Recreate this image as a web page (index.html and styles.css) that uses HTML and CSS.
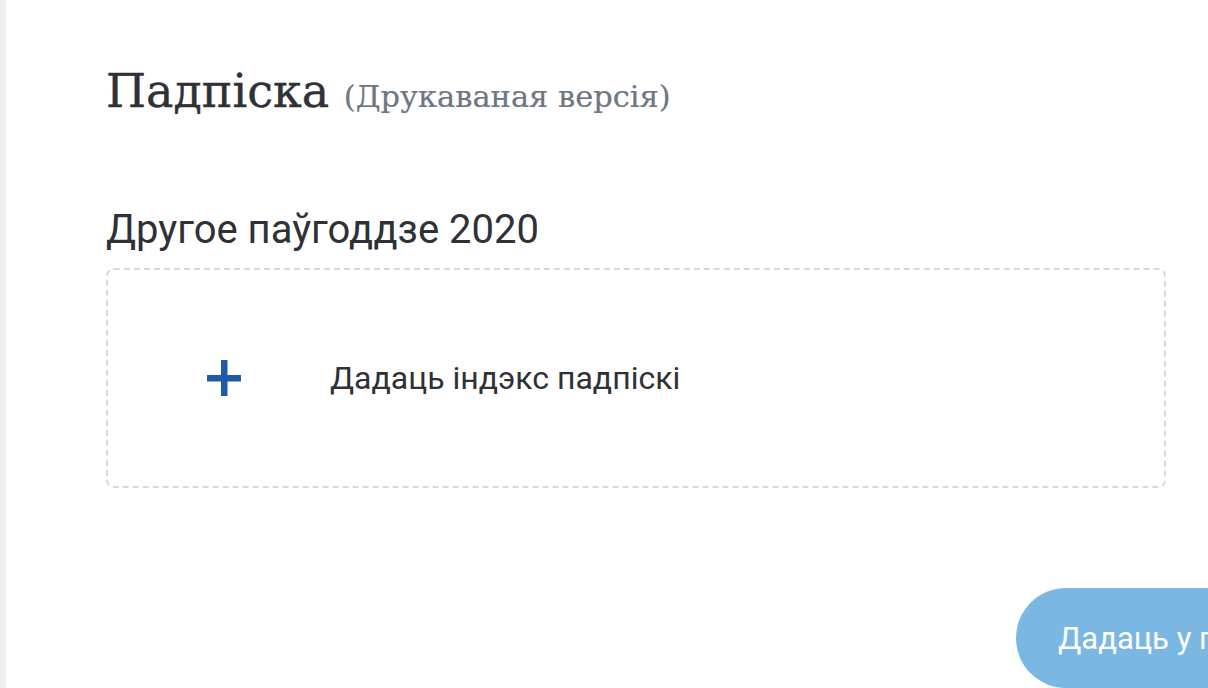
FILE: index.html
```html
<!DOCTYPE html>
<html lang="be">
<head>
<meta charset="utf-8">
<link rel="stylesheet" href="styles.css">
</head>
<body>
<div class="page">
  <div class="strip"></div>
  <main class="main">
    <h1 class="title">Падпіска <span class="subtitle">(Друкаваная версія)</span></h1>
    <h2 class="period">Другое паўгоддзе 2020</h2>
    <div class="addbox">
      <span class="plus">
        <svg width="34" height="36" viewBox="0 0 34 36"><rect x="14" y="0" width="6.5" height="36" fill="#1f5aa6"/><rect x="0" y="15" width="34" height="6.5" fill="#1f5aa6"/></svg>
      </span>
      <span class="addtext">Дадаць індэкс падпіскі</span>
    </div>
    <div class="actions">
      <button class="btn">Дадаць у падпіску</button>
    </div>
  </main>
</div>
</body>
</html>
```
FILE: styles.css
```css
html, body {
  margin: 0;
  padding: 0;
  background: #ffffff;
  overflow: hidden;
}
.page {
  display: flex;
  width: 1208px;
  height: 688px;
  overflow: hidden;
}
.strip {
  width: 6px;
  flex: none;
  background: #efefef;
}
.main {
  flex: none;
  width: 1400px;
  padding-left: 100px;
  box-sizing: border-box;
}
.title {
  margin: 0;
  padding-top: 61px;
  font-family: "DejaVu Serif", serif;
  font-weight: normal;
  font-size: 46px;
  line-height: 60px;
  color: #2e3136;
  -webkit-text-stroke: 0.4px #2e3136;
}
.subtitle {
  font-size: 30.5px;
  color: #6d7782;
  -webkit-text-stroke: 0.2px #6d7782;
}
.period {
  margin: 0;
  padding-top: 81px;
  font-family: Roboto, "Noto Sans", sans-serif;
  font-weight: normal;
  font-size: 40px;
  line-height: 44px;
  color: #2e3136;
}
.addbox {
  margin-top: 16px;
  width: 1060px;
  height: 220px;
  box-sizing: border-box;
  border: 2px dashed #d3dbe1;
  border-radius: 8px;
  display: flex;
  align-items: center;
}
.plus {
  display: flex;
  margin-left: 99px;
  width: 34px;
  height: 36px;
}
.addtext {
  margin-left: 89px;
  font-family: Roboto, "Noto Sans", sans-serif;
  font-size: 32px;
  color: #2e3136;
}
.actions {
  margin-top: 100px;
  padding-left: 910px;
}
.btn {
  height: 100px;
  border: none;
  border-radius: 50px;
  background: #7ab8e3;
  color: #ffffff;
  font-family: Roboto, "Noto Sans", sans-serif;
  font-size: 31px;
  padding: 0 42px;
  white-space: nowrap;
}
```
